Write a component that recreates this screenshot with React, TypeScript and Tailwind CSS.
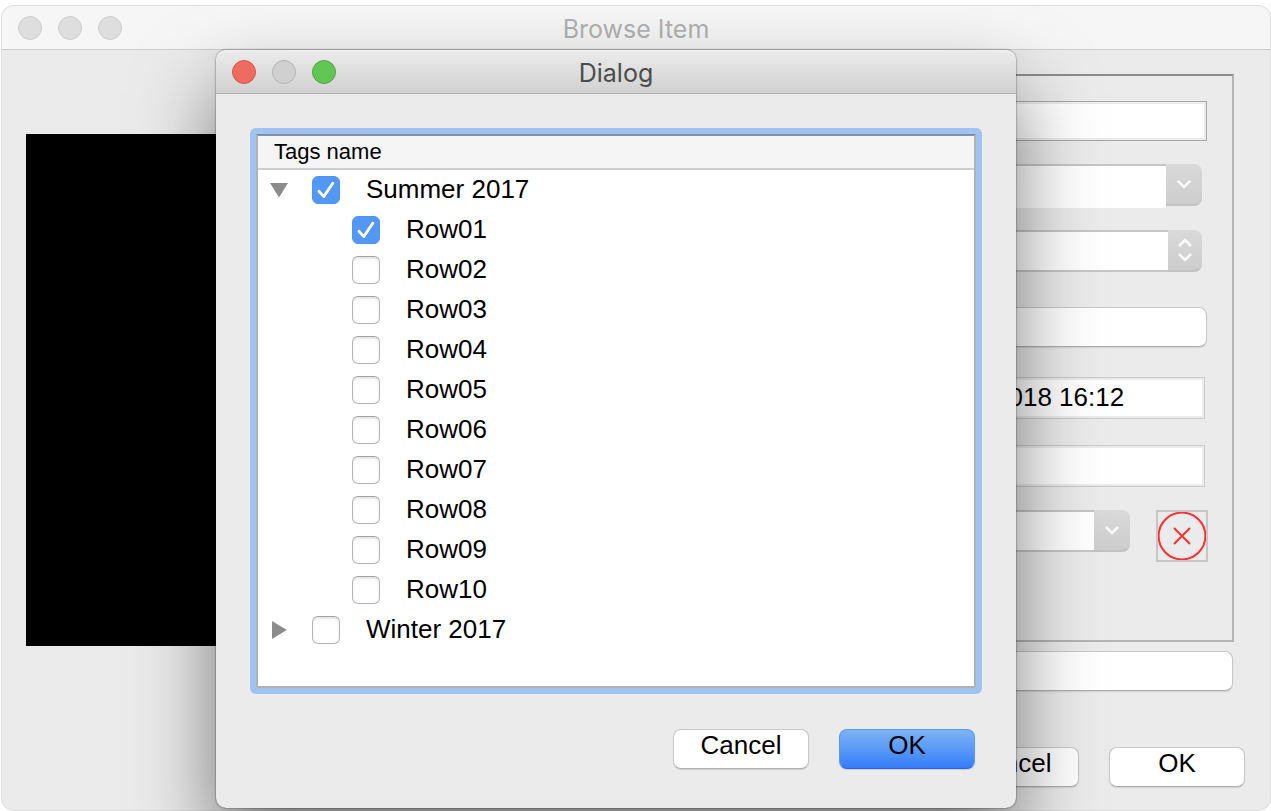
import { useState } from "react";

const rows = ["Row01", "Row02", "Row03", "Row04", "Row05", "Row06", "Row07", "Row08", "Row09", "Row10"];

const chevronDown = "M2 2 L8 8 L14 2";
const chevronUp = "M2 8 L8 2 L14 8";

function Chevron({ d }: { d: string }) {
  return (
    <svg width="16" height="10" viewBox="0 0 16 10" fill="none" stroke="#fafafa" strokeWidth="2.6" aria-hidden="true">
      <path d={d} />
    </svg>
  );
}

function Check({ label, defaultChecked = false }: { label: string; defaultChecked?: boolean }) {
  return (
    <label className="flex h-10 items-start">
      <span className="mt-1.5 grid">
        <input
          type="checkbox"
          defaultChecked={defaultChecked}
          className="peer col-start-1 row-start-1 h-7 w-7 appearance-none rounded-md border border-[#b4b4b4] border-t-[#a2a2a2] bg-white shadow-[inset_0_2px_2px_rgba(0,0,0,0.1)] checked:border-[#4f93f3] checked:bg-[#5498f5] checked:shadow-none"
        />
        <svg
          className="pointer-events-none invisible col-start-1 row-start-1 peer-checked:visible"
          width="28"
          height="28"
          viewBox="0 0 28 28"
          fill="none"
          strokeLinecap="round"
          strokeLinejoin="round"
          aria-hidden="true"
        >
          <path d="M7.2 16.6 L11.8 21.6 L20.6 8.6" stroke="#3a76cc" strokeWidth="2.8" opacity=".5" />
          <path d="M7 15.4 L11.8 20.6 L20.8 7.2" stroke="#fff" strokeWidth="2.9" />
        </svg>
      </span>
      <span className="ml-[26px] leading-[38px]">{label}</span>
    </label>
  );
}

function Disclosure({ open, onClick, label }: { open: boolean; onClick: () => void; label: string }) {
  return (
    <button type="button" aria-label={label} aria-expanded={open} onClick={onClick} className="mr-6 flex h-10 w-[18px] items-center justify-center">
      <svg width="18" height="18" viewBox="0 0 18 18" fill="#8c8c8c" aria-hidden="true">
        <path d={open ? "M0 2 H18 L9 16.5 Z" : "M2 0 V18 L16.8 9 Z"} />
      </svg>
    </button>
  );
}

function PushButton({ children, primary = false }: { children: string; primary?: boolean }) {
  const look = primary
    ? "border-[#5b9cf2] border-b-[#2563f0] bg-linear-to-b from-[#7db3f5] to-[#347cf8]"
    : "border-[#c8c8c8] border-b-[#b0b0b0] bg-white";
  return (
    <button type="button" className={`h-10 w-[136px] rounded-lg border pb-2 leading-[30px] shadow-[0_1px_1px_rgba(0,0,0,0.12)] ${look}`}>
      {children}
    </button>
  );
}

function Combo({ label, tall = false }: { label: string; tall?: boolean }) {
  return (
    <div className="flex items-start">
      <select
        aria-label={label}
        className={
          tall
            ? "h-11 min-w-0 flex-1 appearance-none border-t-2 border-[#c6c6c6] bg-white"
            : "h-[42px] min-w-0 flex-1 appearance-none border-y-2 border-[#c6c6c6] bg-white"
        }
      />
      <span className="flex h-[42px] w-9 items-center justify-center rounded-r-lg border-b-2 border-[#c2c2c2] bg-linear-to-b from-[#d9d9d9] to-[#cdcdcd]">
        <Chevron d={chevronDown} />
      </span>
    </div>
  );
}

function BrowseWindow() {
  return (
    <main className="flex flex-1 flex-col overflow-hidden rounded-xl bg-[#ebebeb] shadow-[0_0_0_1px_#dedede]">
      <header className="grid h-11 shrink-0 grid-cols-[1fr_auto_1fr] items-center border-b border-[#cbcbcb] bg-[#f6f6f6] px-4">
        <div className="flex gap-4">
          <button type="button" aria-label="Close" className="h-6 w-6 rounded-full border border-[#cdcdcd] bg-[#dedede]" />
          <button type="button" aria-label="Minimize" className="h-6 w-6 rounded-full border border-[#cdcdcd] bg-[#dedede]" />
          <button type="button" aria-label="Zoom" className="h-6 w-6 rounded-full border border-[#cdcdcd] bg-[#dedede]" />
        </div>
        <h1 className="pt-0.5 font-['Inter',sans-serif] text-[25px] text-[#b1b1b1]">Browse Item</h1>
      </header>

      <div className="flex flex-1 pl-6">
        <div className="mt-[84px] h-[512px] w-[512px] shrink-0 bg-black" />
        <form className="ml-[22px] flex min-w-0 flex-1 flex-col pt-6">
          <fieldset className="mr-9 flex h-[568px] min-w-0 flex-col border-2 border-[#b4b4b4] border-t-[#8c8c8c] pt-[25px] pl-[424px]">
            <input aria-label="Name" className="mr-[25px] h-10 min-w-0 border border-[#a9a9a9] bg-white px-2 shadow-[inset_0_0_0_2px_#ebebeb]" />
            <div className="mt-[23px] mr-[30px]">
              <Combo label="Type" tall />
            </div>
            <div className="mt-[22px] mr-[30px] flex">
              <input aria-label="Count" className="h-[42px] min-w-0 flex-1 border-y-2 border-[#c6c6c6] bg-white px-2" />
              <span className="flex h-[42px] w-[34px] shrink-0 flex-col items-center justify-center gap-1 rounded-r-lg border-b-2 border-[#c2c2c2] bg-linear-to-b from-[#d9d9d9] to-[#cdcdcd]">
                <button type="button" aria-label="Increase">
                  <Chevron d={chevronUp} />
                </button>
                <button type="button" aria-label="Decrease">
                  <Chevron d={chevronDown} />
                </button>
              </span>
            </div>
            <button type="button" aria-label="Choose" className="mt-[35px] mr-[25px] h-10 rounded-lg border border-[#c8c8c8] border-b-[#b0b0b0] bg-white shadow-[0_1px_1px_rgba(0,0,0,0.12)]" />
            <input aria-label="Date" defaultValue="2018 16:12" className="mt-[30px] mr-[27px] h-[42px] min-w-0 border border-[#cbcbcb] bg-white px-[7px] pb-0.5 shadow-[inset_0_0_0_2px_#ebebeb]" />
            <input aria-label="Notes" className="mt-[26px] mr-[27px] h-[42px] min-w-0 border border-[#cbcbcb] bg-white px-2 shadow-[inset_0_0_0_2px_#ebebeb]" />
            <div className="mt-[23px] mr-6 flex gap-[26px]">
              <div className="min-w-0 flex-1">
                <Combo label="Tags" />
              </div>
              <button type="button" aria-label="Remove" className="h-[52px] w-[52px] shrink-0 border-2 border-[#c6c6c6]">
                <svg width="48" height="48" viewBox="0 0 48 48" fill="none" stroke="#ff3030" strokeWidth="2" aria-hidden="true">
                  <circle cx="24" cy="24" r="23.4" />
                  <path d="M16 16 L32 32 M32 16 L16 32" />
                </svg>
              </button>
            </div>
          </fieldset>
          <button type="button" aria-label="Apply" className="mt-[9px] mr-[37px] h-10 rounded-lg border border-[#c8c8c8] border-b-[#b0b0b0] bg-white shadow-[0_1px_1px_rgba(0,0,0,0.12)]" />
          <div className="mt-14 mr-[25px] flex justify-end gap-[30px]">
            <PushButton>Cancel</PushButton>
            <PushButton>OK</PushButton>
          </div>
        </form>
      </div>
    </main>
  );
}

function TagsDialog() {
  const [summerOpen, setSummerOpen] = useState(true);
  const [winterOpen, setWinterOpen] = useState(false);
  return (
    <section
      role="dialog"
      aria-labelledby="dialog-title"
      className="absolute top-[50px] left-[216px] w-[800px] rounded-[10px] bg-[#ebebeb] pb-[39px] shadow-[0_0_2px_rgba(0,0,0,0.7),0_40px_80px_rgba(0,0,0,0.5)]"
    >
      <header className="grid h-11 grid-cols-[1fr_auto_1fr] items-center rounded-t-[10px] border-t border-b border-t-[#f4f4f4] border-b-[#b1b1b1] bg-linear-to-b from-[#ebebeb] to-[#d1d1d1] px-4">
        <div className="flex gap-4">
          <button type="button" aria-label="Close" className="h-6 w-6 rounded-full border border-[#d9544b] bg-[#ed6b60]" />
          <button type="button" aria-label="Minimize" className="h-6 w-6 rounded-full border border-[#b3b3b3] bg-[#d0d0d0]" />
          <button type="button" aria-label="Zoom" className="h-6 w-6 rounded-full border border-[#51a842] bg-[#62c655]" />
        </div>
        <h2 id="dialog-title" className="pt-0.5 font-['Inter',sans-serif] text-[25px] text-[#4c4c4c]">
          Dialog
        </h2>
      </header>

      <div className="mx-[34px] mt-[34px] rounded-md bg-[#a0c2f0] p-1.5">
        <div className="border-2 border-[#b2b2b2] border-t-[#7f8fae] bg-white pb-9">
          <div className="h-[34px] border-b-2 border-[#cdcdcd] bg-[#f5f5f5] pl-4 text-[22px] leading-[31px]">Tags name</div>
          <ul className="pl-3">
            <li>
              <div className="flex">
                <Disclosure open={summerOpen} onClick={() => setSummerOpen(!summerOpen)} label="Toggle Summer 2017" />
                <Check label="Summer 2017" defaultChecked />
              </div>
              {summerOpen && (
                <ul className="pl-[82px]">
                  {rows.map((name, i) => (
                    <li key={name}>
                      <Check label={name} defaultChecked={i === 0} />
                    </li>
                  ))}
                </ul>
              )}
            </li>
            <li className="flex">
              <Disclosure open={winterOpen} onClick={() => setWinterOpen(!winterOpen)} label="Toggle Winter 2017" />
              <Check label="Winter 2017" />
            </li>
          </ul>
        </div>
      </div>

      <div className="mt-[35px] mr-[41px] flex justify-end gap-[30px]">
        <PushButton>Cancel</PushButton>
        <PushButton primary>OK</PushButton>
      </div>
    </section>
  );
}

export default function App() {
  return (
    <div className="relative flex min-h-screen flex-col overflow-hidden bg-white pt-1.5 pr-px pb-px pl-0.5 font-['Liberation_Sans',Arial,sans-serif] text-[26px] leading-8 text-black">
      <BrowseWindow />
      <TagsDialog />
    </div>
  );
}
